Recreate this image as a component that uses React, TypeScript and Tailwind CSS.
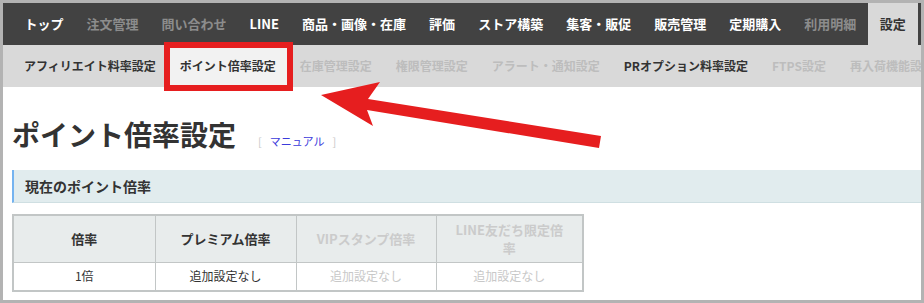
const FONT = { fontFamily: '"Noto Sans CJK JP", "Noto Sans", sans-serif' };

const TOP_NAV = [
  { label: "トップ", on: true },
  { label: "注文管理", on: false },
  { label: "問い合わせ", on: false },
  { label: "LINE", on: true },
  { label: "商品・画像・在庫", on: true },
  { label: "評価", on: true },
  { label: "ストア構築", on: true },
  { label: "集客・販促", on: true },
  { label: "販売管理", on: true },
  { label: "定期購入", on: true },
  { label: "利用明細", on: false },
];

const SUB_NAV = [
  { label: "アフィリエイト料率設定", on: true },
  { label: "ポイント倍率設定", on: true, current: true },
  { label: "在庫管理設定", on: false },
  { label: "権限管理設定", on: false },
  { label: "アラート・通知設定", on: false },
  { label: "PRオプション料率設定", on: true },
  { label: "FTPS設定", on: false },
  { label: "再入荷機能設定", on: false },
];

const COLUMNS = [
  { head: "倍率", value: "1倍", on: true, w: "w-[142px]" },
  { head: "プレミアム倍率", value: "追加設定なし", on: true, w: "w-[141px]" },
  { head: "VIPスタンプ倍率", value: "追加設定なし", on: false, w: "w-[140px]" },
  { head: "LINE友だち限定倍率", value: "追加設定なし", on: false, w: "w-[147px]" },
];

function Arrow() {
  // annotation drawn over the page
  return (
    <svg
      className="pointer-events-none absolute left-0 top-0"
      width="924"
      height="303"
      viewBox="0 0 924 303"
    >
      <polygon
        fill="#e61e1f"
        points="321,95 380,82 368,99 601,136 599,148 367,110 373,126"
      />
    </svg>
  );
}

export default function App() {
  return (
    <div
      className="relative h-[303px] w-[924px] overflow-hidden bg-[#b3b3b3] pb-[3px] pl-[3px] pr-[3px] pt-[3px]"
      style={FONT}
    >
      <div className="flex h-full flex-col overflow-hidden bg-white">
        <nav className="flex h-[42px] shrink-0 items-stretch bg-[#424242] pl-[10px] text-[13px] font-bold">
          {TOP_NAV.map((item) => (
            <div
              key={item.label}
              className={
                "flex items-center whitespace-nowrap px-[11.5px] " +
                (item.on ? "text-white" : "text-[#8c8c8c]")
              }
            >
              {item.label}
            </div>
          ))}
          <div className="flex items-center whitespace-nowrap bg-[#d9d9d9] px-[12px] text-[#333]">
            設定
          </div>
        </nav>

        <nav className="flex h-[42px] shrink-0 items-stretch bg-[#d9d9d9] pl-[9px] text-[12px] font-bold">
          {SUB_NAV.map((item) => (
            <div
              key={item.label}
              className={
                "relative flex items-center whitespace-nowrap px-[12px] " +
                (item.current ? "bg-[#f2f2f2] " : "") +
                (item.on ? "text-[#333]" : "text-[#bdbdbd]")
              }
            >
              {item.label}
              {item.current ? (
                <span className="absolute -bottom-[4px] -left-[4px] -right-[5px] -top-[3px] z-10 border-[6px] border-[#e61e1f]" />
              ) : null}
            </div>
          ))}
        </nav>

        <div className="pl-[9px]">
          <div className="mt-[30px] flex items-end gap-[22px]">
            <h1 className="text-[28px] font-bold leading-[34px] text-[#333]">
              ポイント倍率設定
            </h1>
            <span className="mb-[2px] flex items-center gap-[8px] text-[11px] leading-[16px]">
              <span className="text-[#c8c8c8]">[</span>
              <a className="text-[#3b3bdb]">マニュアル</a>
              <span className="text-[#c8c8c8]">]</span>
            </span>
          </div>

          <div className="mt-[19px] flex h-[33px] items-center border-b border-l-2 border-b-[#cfdfe2] border-l-[#74b3f0] bg-[#e1ecee] pl-[11px] text-[14px] font-bold text-[#333]">
            現在のポイント倍率
          </div>

          <table className="mt-[11px] border-collapse border-2 border-[#c2c6c6] text-center">
            <thead>
              <tr className="h-[47px] bg-[#e8ecec]">
                {COLUMNS.map((col) => (
                  <th
                    key={col.head}
                    className={
                      "border border-[#c2c6c6] px-[16px] text-[13px] font-bold leading-[18px] " +
                      col.w +
                      " " +
                      (col.on ? "text-[#333]" : "text-[#cbcbcb]")
                    }
                  >
                    {col.head}
                  </th>
                ))}
              </tr>
            </thead>
            <tbody>
              <tr className="h-[29px]">
                {COLUMNS.map((col) => (
                  <td
                    key={col.head}
                    className={
                      "border border-[#c2c6c6] text-[12px] " +
                      (col.on ? "text-[#333]" : "text-[#c8c8c8]")
                    }
                  >
                    {col.value}
                  </td>
                ))}
              </tr>
            </tbody>
          </table>
        </div>
      </div>
      <Arrow />
    </div>
  );
}
